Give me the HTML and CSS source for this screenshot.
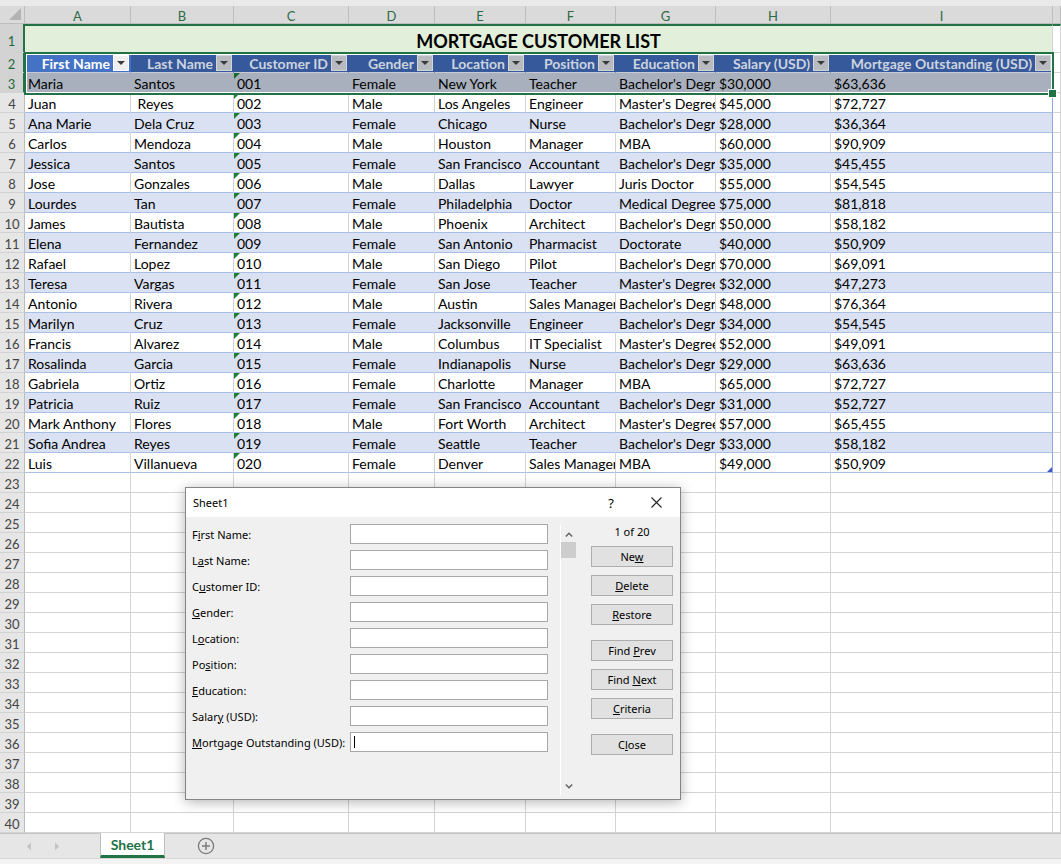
FILE: index.html
```html
<!DOCTYPE html>
<html>
<head>
<meta charset="utf-8">
<link rel="stylesheet" href="styles.css">
</head>
<body>
<div class="app">
  <div class="strip"></div>
  <div class="row colhdr"><div class="corner"></div><div>A</div><div>B</div><div>C</div><div>D</div><div>E</div><div>F</div><div>G</div><div>H</div><div>I</div><div></div></div>
  <div class="row r1"><div class="h hs">1</div><div class="title">MORTGAGE CUSTOMER LIST</div><div class="x"></div></div>
  <div class="row th"><div class="h hs">2</div><div class="act"><span>First Name</span><i class="dd"></i></div><div><span>Last Name</span><i class="dd"></i></div><div><span>Customer ID</span><i class="dd"></i></div><div><span>Gender</span><i class="dd"></i></div><div><span>Location</span><i class="dd"></i></div><div><span>Position</span><i class="dd"></i></div><div><span>Education</span><i class="dd"></i></div><div><span>Salary (USD)</span><i class="dd"></i></div><div><span>Mortgage Outstanding (USD)</span><i class="dd"></i></div><div class="x"></div></div>
  <div class="row t b sel"><div class="h hs">3</div><div>Maria</div><div>Santos</div><div class="c">001</div><div>Female</div><div>New York</div><div>Teacher</div><div>Bachelor's Degree</div><div>$30,000</div><div>$63,636</div><div class="x"></div></div>
  <div class="row t"><div class="h">4</div><div>Juan</div><div>&nbsp;Reyes</div><div class="c">002</div><div>Male</div><div>Los Angeles</div><div>Engineer</div><div>Master's Degree</div><div>$45,000</div><div>$72,727</div><div class="x"></div></div>
  <div class="row t b"><div class="h">5</div><div>Ana Marie</div><div>Dela Cruz</div><div class="c">003</div><div>Female</div><div>Chicago</div><div>Nurse</div><div>Bachelor's Degree</div><div>$28,000</div><div>$36,364</div><div class="x"></div></div>
  <div class="row t"><div class="h">6</div><div>Carlos</div><div>Mendoza</div><div class="c">004</div><div>Male</div><div>Houston</div><div>Manager</div><div>MBA</div><div>$60,000</div><div>$90,909</div><div class="x"></div></div>
  <div class="row t b"><div class="h">7</div><div>Jessica</div><div>Santos</div><div class="c">005</div><div>Female</div><div>San Francisco</div><div>Accountant</div><div>Bachelor's Degree</div><div>$35,000</div><div>$45,455</div><div class="x"></div></div>
  <div class="row t"><div class="h">8</div><div>Jose</div><div>Gonzales</div><div class="c">006</div><div>Male</div><div>Dallas</div><div>Lawyer</div><div>Juris Doctor</div><div>$55,000</div><div>$54,545</div><div class="x"></div></div>
  <div class="row t b"><div class="h">9</div><div>Lourdes</div><div>Tan</div><div class="c">007</div><div>Female</div><div>Philadelphia</div><div>Doctor</div><div>Medical Degree</div><div>$75,000</div><div>$81,818</div><div class="x"></div></div>
  <div class="row t"><div class="h">10</div><div>James</div><div>Bautista</div><div class="c">008</div><div>Male</div><div>Phoenix</div><div>Architect</div><div>Bachelor's Degree</div><div>$50,000</div><div>$58,182</div><div class="x"></div></div>
  <div class="row t b"><div class="h">11</div><div>Elena</div><div>Fernandez</div><div class="c">009</div><div>Female</div><div>San Antonio</div><div>Pharmacist</div><div>Doctorate</div><div>$40,000</div><div>$50,909</div><div class="x"></div></div>
  <div class="row t"><div class="h">12</div><div>Rafael</div><div>Lopez</div><div class="c">010</div><div>Male</div><div>San Diego</div><div>Pilot</div><div>Bachelor's Degree</div><div>$70,000</div><div>$69,091</div><div class="x"></div></div>
  <div class="row t b"><div class="h">13</div><div>Teresa</div><div>Vargas</div><div class="c">011</div><div>Female</div><div>San Jose</div><div>Teacher</div><div>Master's Degree</div><div>$32,000</div><div>$47,273</div><div class="x"></div></div>
  <div class="row t"><div class="h">14</div><div>Antonio</div><div>Rivera</div><div class="c">012</div><div>Male</div><div>Austin</div><div>Sales Manager</div><div>Bachelor's Degree</div><div>$48,000</div><div>$76,364</div><div class="x"></div></div>
  <div class="row t b"><div class="h">15</div><div>Marilyn</div><div>Cruz</div><div class="c">013</div><div>Female</div><div>Jacksonville</div><div>Engineer</div><div>Bachelor's Degree</div><div>$34,000</div><div>$54,545</div><div class="x"></div></div>
  <div class="row t"><div class="h">16</div><div>Francis</div><div>Alvarez</div><div class="c">014</div><div>Male</div><div>Columbus</div><div>IT Specialist</div><div>Master's Degree</div><div>$52,000</div><div>$49,091</div><div class="x"></div></div>
  <div class="row t b"><div class="h">17</div><div>Rosalinda</div><div>Garcia</div><div class="c">015</div><div>Female</div><div>Indianapolis</div><div>Nurse</div><div>Bachelor's Degree</div><div>$29,000</div><div>$63,636</div><div class="x"></div></div>
  <div class="row t"><div class="h">18</div><div>Gabriela</div><div>Ortiz</div><div class="c">016</div><div>Female</div><div>Charlotte</div><div>Manager</div><div>MBA</div><div>$65,000</div><div>$72,727</div><div class="x"></div></div>
  <div class="row t b"><div class="h">19</div><div>Patricia</div><div>Ruiz</div><div class="c">017</div><div>Female</div><div>San Francisco</div><div>Accountant</div><div>Bachelor's Degree</div><div>$31,000</div><div>$52,727</div><div class="x"></div></div>
  <div class="row t"><div class="h">20</div><div>Mark Anthony</div><div>Flores</div><div class="c">018</div><div>Male</div><div>Fort Worth</div><div>Architect</div><div>Master's Degree</div><div>$57,000</div><div>$65,455</div><div class="x"></div></div>
  <div class="row t b"><div class="h">21</div><div>Sofia Andrea</div><div>Reyes</div><div class="c">019</div><div>Female</div><div>Seattle</div><div>Teacher</div><div>Bachelor's Degree</div><div>$33,000</div><div>$58,182</div><div class="x"></div></div>
  <div class="row t"><div class="h">22</div><div>Luis</div><div>Villanueva</div><div class="c">020</div><div>Female</div><div>Denver</div><div>Sales Manager</div><div>MBA</div><div>$49,000</div><div class="rz">$50,909</div><div class="x"></div></div>
  <div class="row"><div class="h">23</div><div></div><div></div><div></div><div></div><div></div><div></div><div></div><div></div><div></div><div></div></div>
  <div class="row"><div class="h">24</div><div></div><div></div><div></div><div></div><div></div><div></div><div></div><div></div><div></div><div></div></div>
  <div class="row"><div class="h">25</div><div></div><div></div><div></div><div></div><div></div><div></div><div></div><div></div><div></div><div></div></div>
  <div class="row"><div class="h">26</div><div></div><div></div><div></div><div></div><div></div><div></div><div></div><div></div><div></div><div></div></div>
  <div class="row"><div class="h">27</div><div></div><div></div><div></div><div></div><div></div><div></div><div></div><div></div><div></div><div></div></div>
  <div class="row"><div class="h">28</div><div></div><div></div><div></div><div></div><div></div><div></div><div></div><div></div><div></div><div></div></div>
  <div class="row"><div class="h">29</div><div></div><div></div><div></div><div></div><div></div><div></div><div></div><div></div><div></div><div></div></div>
  <div class="row"><div class="h">30</div><div></div><div></div><div></div><div></div><div></div><div></div><div></div><div></div><div></div><div></div></div>
  <div class="row"><div class="h">31</div><div></div><div></div><div></div><div></div><div></div><div></div><div></div><div></div><div></div><div></div></div>
  <div class="row"><div class="h">32</div><div></div><div></div><div></div><div></div><div></div><div></div><div></div><div></div><div></div><div></div></div>
  <div class="row"><div class="h">33</div><div></div><div></div><div></div><div></div><div></div><div></div><div></div><div></div><div></div><div></div></div>
  <div class="row"><div class="h">34</div><div></div><div></div><div></div><div></div><div></div><div></div><div></div><div></div><div></div><div></div></div>
  <div class="row"><div class="h">35</div><div></div><div></div><div></div><div></div><div></div><div></div><div></div><div></div><div></div><div></div></div>
  <div class="row"><div class="h">36</div><div></div><div></div><div></div><div></div><div></div><div></div><div></div><div></div><div></div><div></div></div>
  <div class="row"><div class="h">37</div><div></div><div></div><div></div><div></div><div></div><div></div><div></div><div></div><div></div><div></div></div>
  <div class="row"><div class="h">38</div><div></div><div></div><div></div><div></div><div></div><div></div><div></div><div></div><div></div><div></div></div>
  <div class="row"><div class="h">39</div><div></div><div></div><div></div><div></div><div></div><div></div><div></div><div></div><div></div><div></div></div>
  <div class="row"><div class="h">40</div><div></div><div></div><div></div><div></div><div></div><div></div><div></div><div></div><div></div><div></div></div>

  <div class="tabs">
    <div class="nav">
      <svg width="6" height="9" viewBox="0 0 6 9"><path d="M5 0.5 L0.8 4.5 L5 8.5 Z" fill="#c4c4c4"/></svg>
      <svg width="6" height="9" viewBox="0 0 6 9"><path d="M1 0.5 L5.2 4.5 L1 8.5 Z" fill="#c4c4c4"/></svg>
    </div>
    <div class="tab">Sheet1</div>
    <div class="add"><svg width="18" height="18" viewBox="0 0 18 18"><circle cx="9" cy="9" r="7.6" fill="none" stroke="#7a7a7a" stroke-width="1.3"/><path d="M9 5v8M5 9h8" stroke="#7a7a7a" stroke-width="1.4"/></svg></div>
  </div>
  <div class="status"></div>

  <div class="selbox"></div>

  <div class="dlg">
    <div class="dlg-title">
      <span class="dt">Sheet1</span>
      <span class="help">?</span>
      <svg class="xbtn" width="11" height="11" viewBox="0 0 11 11"><path d="M0.5 0.5 L10.5 10.5 M10.5 0.5 L0.5 10.5" stroke="#222" stroke-width="1.1"/></svg>
    </div>
    <div class="dlg-body">
      <div class="form">
        <div class="frow"><span class="lbl">F<u>i</u>rst Name:</span><div class="inp"></div></div>
        <div class="frow"><span class="lbl">L<u>a</u>st Name:</span><div class="inp"></div></div>
        <div class="frow"><span class="lbl">C<u>u</u>stomer ID:</span><div class="inp"></div></div>
        <div class="frow"><span class="lbl"><u>G</u>ender:</span><div class="inp"></div></div>
        <div class="frow"><span class="lbl">L<u>o</u>cation:</span><div class="inp"></div></div>
        <div class="frow"><span class="lbl">Po<u>s</u>ition:</span><div class="inp"></div></div>
        <div class="frow"><span class="lbl"><u>E</u>ducation:</span><div class="inp"></div></div>
        <div class="frow"><span class="lbl">Salar<u>y</u> (USD):</span><div class="inp"></div></div>
        <div class="frow"><span class="lbl"><u>M</u>ortgage Outstanding (USD):</span><div class="inp focus"><span class="caret"></span></div></div>
      </div>
      <div class="vscroll">
        <svg class="up" width="8" height="5" viewBox="0 0 8 5"><path d="M0.8 4.4 L4 1.2 L7.2 4.4" fill="none" stroke="#606060" stroke-width="1.4"/></svg>
        <div class="thumb"></div>
        <div class="spacer"></div>
        <svg class="down" width="8" height="5" viewBox="0 0 8 5"><path d="M0.8 0.6 L4 3.8 L7.2 0.6" fill="none" stroke="#606060" stroke-width="1.4"/></svg>
      </div>
      <div class="btns">
        <div class="count">1 of 20</div>
        <div class="btn first">Ne<u>w</u></div>
        <div class="btn"><u>D</u>elete</div>
        <div class="btn"><u>R</u>estore</div>
        <div class="btn gap">Find <u>P</u>rev</div>
        <div class="btn">Find <u>N</u>ext</div>
        <div class="btn"><u>C</u>riteria</div>
        <div class="btn gap">C<u>l</u>ose</div>
      </div>
    </div>
  </div>
</div>
</body>
</html>
```

FILE: styles.css
```css
* { box-sizing: border-box; }
html, body { margin: 0; padding: 0; }
body {
  width: 1061px;
  height: 864px;
  overflow: hidden;
  background: #ffffff;
  font-family: Lato, "Liberation Sans", sans-serif;
  font-size: 14px;
  color: #000;
}
.app { position: relative; width: 1061px; height: 864px; overflow: hidden; }
.strip { height: 6px; background: #e9e9e9; }

.row {
  display: grid;
  grid-template-columns: 25px 106px 103px 115px 86px 91px 90px 100px 115px 222px 8px;
  height: 20px;
}
.row > div {
  position: relative;
  border-right: 1px solid #d4d4d4;
  border-bottom: 1px solid #d4d4d4;
  overflow: hidden;
  white-space: nowrap;
  padding-left: 3px;
  line-height: 22px;
}
.row > .h {
  padding: 0;
  text-align: center;
  background: #e6e6e6;
  color: #444;
  font-size: 13px;
  line-height: 23px;
  border-right-color: #bcbcbc;
  border-bottom-color: #d2d2d2;
}
.row > .hs {
  background: #d3d3d3;
  color: #1f6b3d;
  border-right: 2px solid #217346;
}

/* column headers */
.colhdr { height: 18px; }
.colhdr > div {
  background: #dadada;
  color: #2f6a44;
  text-align: center;
  padding: 0;
  font-size: 13px;
  line-height: 20px;
  border-right-color: #bdbdbd;
  border-bottom-color: #bdbdbd;
}
.colhdr > .corner { background: #dadada; }
.colhdr > .corner::after {
  content: "";
  position: absolute;
  right: 3px;
  bottom: 3px;
  border-left: 12px solid transparent;
  border-bottom: 12px solid #b3b3b3;
}

/* title row */
.r1 { height: 29px; }
.r1 > .h { line-height: 35px; }
.r1 > div:not(.h) { border-top: 2px solid #217346; }
.r1 > .title {
  grid-column: 2 / 11;
  background: #e2efda;
  text-align: center;
  font-weight: bold;
  font-size: 18px;
  line-height: 30px;
  padding: 0;
  border-right-color: #d4d4d4;
}

/* table header */
.th > div:not(.h):not(.x) {
  background: #35599a;
  color: #cdd3df;
  font-weight: bold;
  display: flex;
  justify-content: flex-end;
  align-items: center;
  gap: 3px;
  padding: 0 1px 0 0;
  border-right-color: #35599a;
  border-bottom-color: #c5cad4;
}
.th span { line-height: 20px; padding-top: 3px; }
.row.th > div.act:not(.h) { background: #4472c4; color: #ffffff; border-right-color: #4472c4; }
.dd {
  display: block;
  position: relative;
  width: 16px;
  height: 16px;
  flex: none;
  background: #b7babf;
  border: 1px solid #d3d5d9;
}
.dd::after {
  content: "";
  position: absolute;
  left: 3px;
  top: 5px;
  border-left: 4px solid transparent;
  border-right: 4px solid transparent;
  border-top: 4px solid #3a3a3a;
}
.act .dd { background: #efefef; border-color: #ffffff; }

/* table body */
.t > div { border-bottom-color: #aabfe5; }
.t > .h { border-bottom-color: #d2d2d2; }
.t > .x { border-bottom-color: #d4d4d4; }
.t > div:nth-child(10) { border-right-color: #8ea9db; }
.b > div:not(.h):not(.x) { background: #d9e1f2; border-right-color: #d9e1f2; }
.row.b > div:nth-child(10) { border-right-color: #8ea9db; }
.sel > div:not(.h):not(.x) { background: #a9b0bd; border-right-color: #a9b0bd; }
.row.sel > div:nth-child(10) { border-right-color: #a9b0bd; }

.c::before {
  content: "";
  position: absolute;
  left: 0;
  top: 0;
  border-top: 6px solid #1d8036;
  border-right: 6px solid transparent;
}
.sel .c::before { border-top-color: #1a6a2e; }
.rz::after {
  content: "";
  position: absolute;
  right: 0;
  bottom: 0;
  border-left: 5px solid transparent;
  border-bottom: 5px solid #3b58c4;
}

/* selection outline */
.selbox {
  position: absolute;
  left: 24px;
  top: 52px;
  width: 1030px;
  height: 43px;
  border: 2px solid #217346;
  box-shadow: inset 0 0 0 1px #ffffff;
  pointer-events: none;
}
.selbox::after {
  content: "";
  position: absolute;
  right: -5px;
  bottom: -5px;
  width: 7px;
  height: 7px;
  background: #217346;
  border: 1px solid #ffffff;
}

/* sheet tabs */
.tabs {
  height: 25px;
  background: #e6e6e6;
  border-top: 1px solid #c6c6c6;
  display: flex;
}
.nav {
  width: 100px;
  display: flex;
  align-items: center;
  gap: 22px;
  padding-left: 26px;
}
.tab {
  width: 65px;
  margin-top: -1px;
  background: #ffffff;
  border-left: 1px solid #bdbdbd;
  border-right: 1px solid #bdbdbd;
  border-bottom: 3px solid #217346;
  color: #217346;
  font-weight: bold;
  font-size: 14px;
  text-align: center;
  line-height: 23px;
}
.add {
  margin-left: 32px;
  display: flex;
  align-items: center;
}
.status {
  height: 6px;
  background: #f3f3f3;
  border-top: 1px solid #d6d6d6;
}

/* dialog */
.dlg {
  position: absolute;
  left: 185px;
  top: 487px;
  width: 496px;
  height: 313px;
  background: #f0f0f0;
  border: 1px solid #858585;
  box-shadow: 0 2px 12px rgba(0, 0, 0, 0.3);
  font-family: "Noto Sans", "Open Sans", sans-serif;
  font-size: 11px;
  color: #000;
}
.dlg-title {
  height: 29px;
  background: #ffffff;
  display: flex;
  align-items: center;
  padding-left: 7px;
}
.dt { flex: 1; }
.help { font-size: 13px; margin-right: 37px; }
.xbtn { margin-right: 18px; display: block; }
.dlg-body {
  display: flex;
  height: 282px;
  padding: 7px 0 0 6px;
}
.form {
  width: 356px;
  display: flex;
  flex-direction: column;
  gap: 6px;
}
.frow { display: flex; align-items: center; height: 20px; }
.lbl { width: 158px; flex: none; }
.inp {
  width: 198px;
  height: 20px;
  background: #ffffff;
  border: 1px solid #a6a6a6;
  position: relative;
}
.caret {
  position: absolute;
  left: 3px;
  top: 3px;
  width: 1px;
  height: 12px;
  background: #000;
}
.vscroll {
  margin-left: 12px;
  margin-top: 1px;
  width: 18px;
  height: 270px;
  border-left: 1px solid #ffffff;
  display: flex;
  flex-direction: column;
}
.vscroll .up { margin: 7px 0 0 4px; display: block; }
.thumb { width: 15px; height: 16px; margin-top: 5px; background: #cdcdcd; }
.spacer { flex: 1; }
.vscroll .down { margin: 0 0 6px 4px; display: block; }
.btns {
  margin-left: 13px;
  width: 82px;
  display: flex;
  flex-direction: column;
}
.count {
  margin-top: 1px;
  text-align: center;
  line-height: 14px;
}
.btn {
  height: 21px;
  margin-top: 8px;
  background: #e1e1e1;
  border: 1px solid #adadad;
  text-align: center;
  line-height: 19px;
}
.btn.first { margin-top: 7px; }
.btn.gap { margin-top: 15px; }
```
